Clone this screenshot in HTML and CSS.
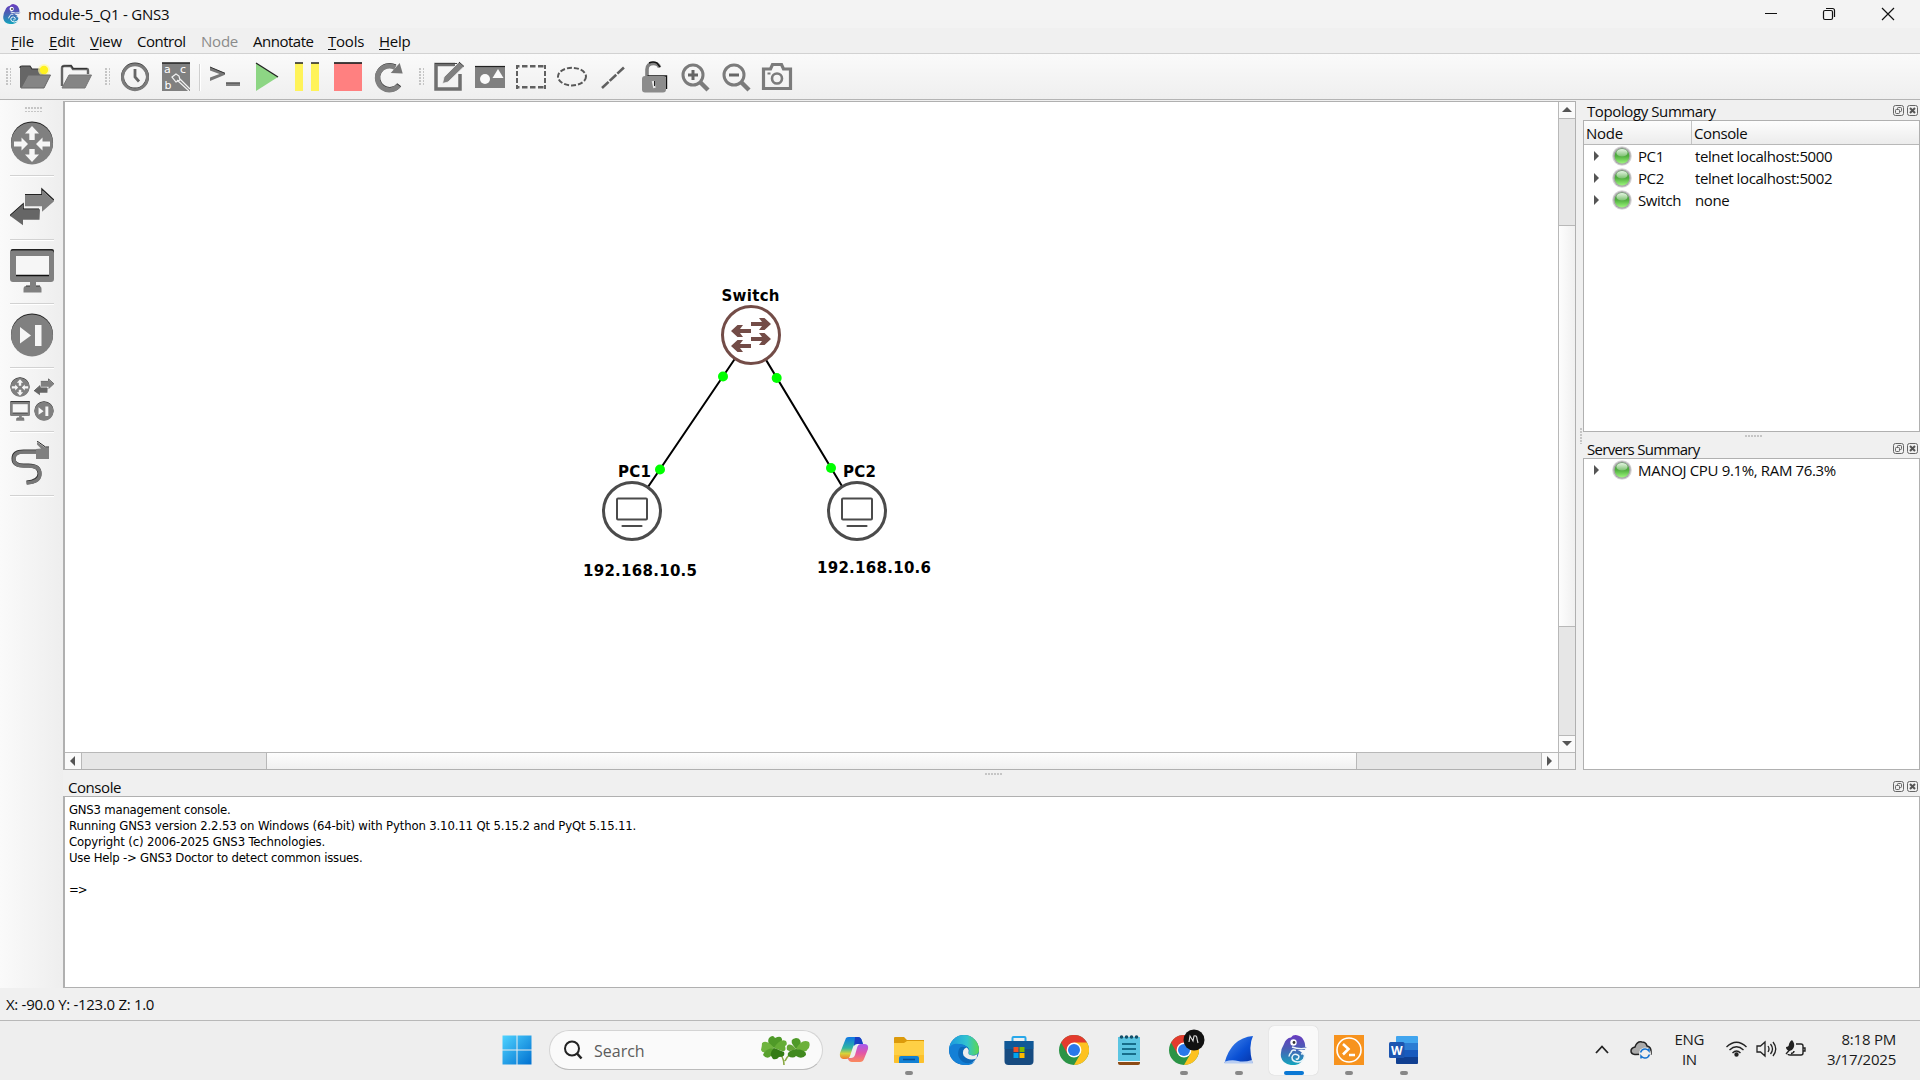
FILE: index.html
```html
<!DOCTYPE html>
<html lang="en">
<head>
<meta charset="utf-8">
<title>module-5_Q1 - GNS3</title>
<link rel="stylesheet" href="styles.css">
</head>
<body>
<svg class="defs" width="0" height="0">
  <defs>
    <linearGradient id="led" x1="0" y1="0" x2="0" y2="1"><stop offset="0" stop-color="#4f9a4c"/><stop offset=".5" stop-color="#4fae3d"/><stop offset="1" stop-color="#9cf57c"/></linearGradient>
    <linearGradient id="shine" x1="0" y1="0" x2="0" y2="1"><stop offset="0" stop-color="#e6f5e4"/><stop offset="1" stop-color="#7cc070"/></linearGradient>
    <linearGradient id="gns" gradientUnits="userSpaceOnUse" x1="0" y1="0" x2="0" y2="30"><stop offset="0" stop-color="#6a3bc0"/><stop offset=".45" stop-color="#4a5fb4"/><stop offset="1" stop-color="#14a5bd"/></linearGradient>
    <linearGradient id="win" x1="0" y1="0" x2="1" y2="1"><stop offset="0" stop-color="#4fd3ff"/><stop offset="1" stop-color="#0070d0"/></linearGradient>
    <symbol id="s-led" viewBox="0 0 20 20"><circle cx="10" cy="10" r="9.8" fill="#d6d6d6"/><circle cx="10" cy="10" r="8.7" fill="#a9a7aa"/><circle cx="10" cy="10" r="7.4" fill="url(#led)"/><ellipse cx="10" cy="6.7" rx="5.6" ry="3.8" fill="url(#shine)"/></symbol>
    <symbol id="s-float" viewBox="0 0 11 11"><rect x=".5" y=".5" width="10" height="10" rx="2" fill="none" stroke="#666"/><rect x="4.5" y="2.5" width="4" height="4" rx=".8" fill="none" stroke="#666"/><rect x="2.5" y="4.5" width="4" height="4" rx=".8" fill="#f0f0f0" stroke="#666"/></symbol>
    <symbol id="s-close" viewBox="0 0 11 11"><rect x=".5" y=".5" width="10" height="10" rx="2" fill="none" stroke="#666"/><path d="M3 3l5 5M8 3l-5 5" stroke="#555" stroke-width="2"/></symbol>
    <symbol id="s-router" viewBox="0 0 44 44"><circle cx="22" cy="21.4" r="21" fill="#222"/><circle cx="22" cy="22.4" r="21" fill="#808080"/><g fill="#f6f6f6"><path d="M22 5l7 7.5h-4.3V19h-5.4v-6.5H15z"/><path d="M22 41l7-7.500h-4.300V28h-5.400v5.500H15z"/><path d="M18 23l-6.500-6.500v4H4v5h7.500v4z"/><path d="M26 23l6.500-6.500v4H40v5h-7.500v4z"/></g></symbol>
    <symbol id="s-switch" viewBox="0 0 44 44"><g transform="translate(0 2.200)"><path d="M15 7.500h17V2l12 11" fill="none" stroke="#222" stroke-width="1.500"/><path d="M15 8h17V3l12 11-12 10.500V19H15z" fill="#808080"/><path d="M29 22H13v-5L0 28.500" fill="none" stroke="#111" stroke-width="1.500"/><path d="M30 22H13v-5L0 28.500 13 38v-5.500h16.500z" fill="#666"/></g></symbol>
    <symbol id="s-monitor" viewBox="0 0 44 44"><rect x=".5" y="0" width="43.500" height="30" rx="2" fill="#222"/><path d="M3 1.500h38q3 0 3 3V30q0 3-3 3H26v4h3q2.500 0 2.500 3v3.500h-18V40q0-3 2.500-3h4v-4H3q-3 0-3-3V4.500q0-3 3-3z" fill="#808080"/><path d="M6 7h33v19H6z" fill="#f6f6f6"/><path d="M6 26.500h33" stroke="#111" stroke-width="1.300"/><path d="M16 37h4M26 37h4" stroke="#333"/></symbol>
    <symbol id="s-end" viewBox="0 0 44 44"><circle cx="22" cy="21.400" r="21" fill="#222"/><circle cx="22" cy="22.400" r="21" fill="#808080"/><path d="M10 14v16.500l11-8zM25 12h6.500v21H25z" fill="#f6f6f6"/></symbol>
    <symbol id="s-chameleon" viewBox="0 0 30 30"><path d="M5 9Q7 3 12 2.500q2-3 6-2.300 5 .800 7 5.800 1.500 3 1 5.500l1.500 1-2 2.500-7 0q5 2 6.500 5.500-1 9-10.500 9.700Q4 30 2 22q-1-7 3-13z" fill="url(#gns)"/><path d="M13 12q7 2.500 14 1.200M17 15.500q-4-1.500-5 2-2 2-2 4M22 19q4-1 3.500 3-1.500 5-7 5-5.500-.500-5.500-4.500 1-4 4.500-3t2 3.500-2.500 .500" fill="none" stroke="#eaf4f8" stroke-width="1.500"/><circle cx="14.500" cy="7.500" r="3.200" fill="#fff"/><circle cx="15" cy="7.500" r="1.400" fill="#333"/></symbol>
    <symbol id="s-chrome" viewBox="0 0 30 30"><circle cx="15" cy="15" r="15" fill="#2b9446"/><path d="M15 15L2 7.500A15 15 0 0 1 28 7.500z" fill="#e33b2e"/><path d="M15 7.500h13A15 15 0 0 1 15 30l6.500-11.200z" fill="#fdc221"/><path d="M2 7.500l6.500 11.250L15 7.500z" fill="#e33b2e"/><circle cx="15" cy="15" r="7.400" fill="#fff"/><circle cx="15" cy="15" r="6" fill="#2a78ea"/></symbol>
  </defs>
</svg>

<header class="titlebar">
  <svg class="app-icon" viewBox="0 0 30 30"><use href="#s-chameleon"/></svg>
  <span class="app-title">module-5_Q1 - GNS3</span>
  <svg class="window-buttons" width="132" height="28" viewBox="0 0 132 28" fill="none" stroke="#111" stroke-width="1.200"><path d="M1 13.500h12M118 8l12 12M130 8l-12 12"/><rect x="59.500" y="10.500" width="9" height="9" rx="1.500"/><path d="M62 8.500h6.500q2 0 2 2V17"/></svg>
</header>

<nav class="menubar">
  <span><u>F</u>ile</span><span><u>E</u>dit</span><span><u>V</u>iew</span><span class="tight">Control</span><span class="disabled">Node</span><span class="tight">Annotate</span><span><u>T</u>ools</span><span><u>H</u>elp</span>
</nav>

<div class="toolbar">
  <i class="grip first"></i>
  <svg viewBox="0 0 30 30"><path d="M0 6q0-2 2-2h8l2 3h14v4L0 26z" fill="#666"/><path d="M0 6q0-2 2-2h8l2 3h9" fill="none" stroke="#333" stroke-width="1.200"/><circle cx="24" cy="8" r="6" fill="#fff9a0" opacity=".7"/><circle cx="24" cy="8" r="4.200" fill="#fff21f"/><path d="M8 13h22.500l-6.500 13H1z" fill="#858585" stroke="#666"/></svg>
  <svg viewBox="0 0 30 30"><path d="M1 24V6q0-2 2-2h7l2 3h14q1 0 1 2v3" fill="none" stroke="#666" stroke-width="2.400"/><path d="M1 5q1-1.500 9-1.500l2 3h14" fill="none" stroke="#333" stroke-width="1.200"/><path d="M8 13h22.500l-6.500 13H1z" fill="#858585" stroke="#777"/></svg>
  <i class="grip"></i>
  <svg viewBox="0 0 30 30"><circle cx="15" cy="14.600" r="12.500" fill="none" stroke="#333" stroke-width="3"/><circle cx="15" cy="15.200" r="12.500" fill="none" stroke="#7b7b7b" stroke-width="3"/><path d="M15 7v8l4 4.500" fill="none" stroke="#666" stroke-width="2.800"/></svg>
  <svg viewBox="0 0 30 30"><path d="M1 1h28v28H1z" fill="#808080"/><path d="M1 1h28" stroke="#222" stroke-width="1.500"/><g class="glyphs"><text x="3" y="10.500">a</text><text x="19" y="10.500">c</text><text x="3.500" y="26.500">b</text></g><path d="M11 15l4-3 3 2 1 4-4 2zM16 18l12 11M19 17l10 10" fill="none" stroke="#f2f2f2" stroke-width="1.200"/></svg>
  <i class="separator"></i>
  <svg viewBox="0 0 30 30"><path d="M0 5l15 6v1.800L0 19v-3.500l9.500-3.500L0 8.500z" fill="#777"/><path d="M0 5l15 6.300" stroke="#333"/><path d="M16 20.500h14v3.500H16z" fill="#808080"/><path d="M16 21h14" stroke="#444"/></svg>
  <svg viewBox="0 0 30 30"><path d="M5 1l22 14L5 29z" fill="#8dd684"/><path d="M5 1l22 14" stroke="#222" stroke-width="1.300"/></svg>
  <svg viewBox="0 0 30 30"><path d="M3 1h8v28H3zM19 1h8v28h-8z" fill="#fff359"/><path d="M3 1h8M19 1h8" stroke="#222" stroke-width="1.500"/></svg>
  <svg viewBox="0 0 30 30"><path d="M1 1h28v28H1z" fill="#ff8080"/><path d="M1 1h28" stroke="#222" stroke-width="1.700"/></svg>
  <svg viewBox="0 0 30 30"><g transform="translate(.7 0)"><path d="M24.500 23.500A12 12 0 1 1 20.500 5.500" fill="none" stroke="#333" stroke-width="5" transform="translate(0 -.7)"/><path d="M24 23.500A12 12 0 1 1 20.500 5.500" fill="none" stroke="#808080" stroke-width="5"/><path d="M25 1v0l3 10.500-12-.500z" fill="#777"/></g></svg>
  <i class="grip last"></i>
  <svg viewBox="0 0 30 30"><path d="M26 12v15H2V2.500h19" fill="none" stroke="#6f6f6f" stroke-width="3.500"/><path d="M1 1.500h24" stroke="#444"/><path d="M10 15L25 0l5 4.500L14 20l-5.500 1.500z" fill="#808080" stroke="#f3f3f3" stroke-width=".8"/><path d="M25 0l5 4.500" stroke="#333"/></svg>
  <svg viewBox="0 0 30 30"><path d="M0 4h30v22H0z" fill="#808080"/><path d="M0 4.500h30" stroke="#222" stroke-width="1.200"/><circle cx="10" cy="17" r="5" fill="#fafafa"/><path d="M23 7l5.500 9h-11z" fill="#fafafa"/></svg>
  <svg viewBox="0 0 30 30" fill="none" stroke="#606060"><path d="M0 4.300h30M0 25.200h30" stroke-width="2.600" stroke-dasharray="5.500 2.500" stroke-dashoffset="2"/><path d="M1 3v24M29 3v24" stroke-width="2" stroke-dasharray="5 2" stroke-dashoffset="1"/></svg>
  <svg viewBox="0 0 30 30"><ellipse cx="15" cy="14.600" rx="14" ry="8.800" fill="none" stroke="#585858" stroke-width="2" stroke-dasharray="5 2"/></svg>
  <svg viewBox="0 0 30 30"><path d="M4 26L27 4.500" stroke="#606060" stroke-width="2.600" stroke-dasharray="9 1.500"/></svg>
  <svg viewBox="0 0 30 30"><path d="M8 14V7.500q0-6 6.500-6 5 0 6 4" fill="none" stroke="#808080" stroke-width="3.600"/><path d="M10 1q4-2 8 0l3 4M8.500 14h19V27" fill="none" stroke="#111" stroke-width="1.400"/><rect x="3" y="14" width="24" height="16.500" rx="3" fill="#8c8c8c"/><path d="M14 19l1.500 7" stroke="#e8e8e8" stroke-width="2.500"/><path d="M15.500 19v5" stroke="#222"/></svg>
  <svg viewBox="0 0 30 30" fill="none" stroke="#7b7b7b"><circle cx="13" cy="13" r="10" stroke-width="3"/><path d="M20 20l8 8" stroke-width="4.500"/><path d="M8 13h10M13 8v10" stroke-width="3" stroke="#666"/></svg>
  <svg viewBox="0 0 30 30" fill="none" stroke="#7b7b7b"><circle cx="13" cy="13" r="10" stroke-width="3"/><path d="M20 20l8 8" stroke-width="4.500"/><path d="M8 13h10" stroke-width="3" stroke="#666"/></svg>
  <svg viewBox="0 0 30 30" fill="none" stroke="#7b7b7b"><path d="M1.500 7h7l2-4.500h9l2 4.500h7v19.500h-27z" stroke-width="3.200"/><circle cx="15" cy="16.500" r="5" stroke-width="2.600"/><path d="M5.500 11.500h3" stroke-width="2"/></svg>
</div>

<main class="workspace">
  <aside class="devices">
    <i class="hgrip"></i>
    <div><svg><use href="#s-router"/></svg></div>
    <div><svg><use href="#s-switch"/></svg></div>
    <div><svg><use href="#s-monitor"/></svg></div>
    <div><svg><use href="#s-end"/></svg></div>
    <div class="all"><svg><use href="#s-router"/></svg><svg><use href="#s-switch"/></svg><svg><use href="#s-monitor"/></svg><svg><use href="#s-end"/></svg></div>
    <div><svg viewBox="0 0 44 44"><path d="M27 11H14q-10 0-10 7t10 7h5q11 0 11 8t-13 9" fill="none" stroke="#333" stroke-width="4" transform="translate(-.5 -.6)"/><path d="M27 11H14q-10 0-10 7t10 7h5q11 0 11 8t-13 9" fill="none" stroke="#777" stroke-width="3.400"/><path d="M27 1l8 5.500h4V18H26V8l5-.500-4-4z" fill="#808080"/><path d="M27 0l8.500 6H39" fill="none" stroke="#222"/></svg></div>
  </aside>

  <div class="content">
    <div class="upper">
      <section class="canvas-view">
        <svg class="scene" width="1493" height="650" viewBox="65 102 1493 650">
          <path d="M631.700 511L751 335 857 511" fill="none" stroke="#000" stroke-width="2"/>
          <g fill="#0f0"><circle cx="723" cy="376.500" r="5"/><circle cx="660" cy="469.500" r="5"/><circle cx="776.700" cy="378" r="5"/><circle cx="831" cy="468" r="5"/></g>
          <g transform="translate(751 335)"><circle r="28.500" fill="#fff" stroke="#734c47" stroke-width="3"/><path id="arrow-r" d="M0-13h11l-3-4h5.500l6.500 6-6.500 6H8l3-4H0z" fill="#734c47"/><use href="#arrow-r" y="15"/><path id="arrow-l" d="M0-6h-11l3-4h-5.500l-6.500 6 6.500 6h5.500l-3-4H0z" fill="#734c47"/><use href="#arrow-l" y="15"/></g>
          <g id="pc" fill="none" stroke="#4b4b4b"><circle cx="632" cy="511" r="28.500" fill="#fff" stroke-width="3"/><rect x="617" y="498.500" width="30" height="21" rx="1" stroke-width="2"/><path d="M622.500 526h19" stroke-width="2.200" stroke-linecap="round"/></g>
          <use href="#pc" x="225"/>
          <g class="labels"><text x="721.500" y="300.500" textLength="58">Switch</text><text x="618" y="476.500" textLength="33">PC1</text><text x="843" y="476.500" textLength="33">PC2</text><text x="583" y="575.500" textLength="114">192.168.10.5</text><text x="817" y="572.500" textLength="114">192.168.10.6</text></g>
        </svg>
        <div class="vscroll"><i class="up"></i><b></b><i class="down"></i></div>
        <div class="hscroll"><i class="left"></i><b></b><i class="right"></i></div>
        <div class="corner"></div>
      </section>
      <div class="splitter"></div>
      <section class="docks">
        <div class="dock-title"><span>Topology Summary</span><svg><use href="#s-float"/></svg><svg><use href="#s-close"/></svg></div>
        <div class="box topology">
          <div class="tree-head"><span>Node</span><span>Console</span></div>
          <div class="row"><i></i><svg><use href="#s-led"/></svg><span class="name">PC1</span><span>telnet localhost:5000</span></div>
          <div class="row"><i></i><svg><use href="#s-led"/></svg><span class="name">PC2</span><span>telnet localhost:5002</span></div>
          <div class="row"><i></i><svg><use href="#s-led"/></svg><span class="name">Switch</span><span>none</span></div>
        </div>
        <div class="dock-split"><i class="hgrip"></i></div>
        <div class="dock-title servers"><span>Servers Summary</span><svg><use href="#s-float"/></svg><svg><use href="#s-close"/></svg></div>
        <div class="box servers-box">
          <div class="row"><i></i><svg><use href="#s-led"/></svg><span class="load">MANOJ CPU 9.1%, RAM 76.3%</span></div>
        </div>
      </section>
    </div>
    <div class="console-split"><i class="hgrip"></i></div>
    <div class="dock-title console-title"><span>Console</span><svg><use href="#s-float"/></svg><svg><use href="#s-close"/></svg></div>
    <div class="box console"><p>GNS3 management console.</p><p class="wide">Running GNS3 version 2.2.53 on Windows (64-bit) with Python 3.10.11 Qt 5.15.2 and PyQt 5.15.11.</p><p class="wide">Copyright (c) 2006-2025 GNS3 Technologies.</p><p>Use Help -&gt; GNS3 Doctor to detect common issues.</p><p>&nbsp;</p><p class="prompt">=&gt;</p></div>
  </div>
</main>

<div class="status"><span>X: -90.0 Y: -123.0 Z: 1.0</span></div>

<footer class="taskbar">
  <div class="apps">
    <div class="start"><svg width="30" height="30" viewBox="0 0 30 30" fill="url(#win)"><path d="M.5.500H29.500V29.500H.500z"/><path d="M15 0v30M0 15h30" stroke="#eee"/></svg></div>
    <div class="search">
      <svg width="20" height="20" viewBox="0 0 20 20" fill="none" stroke="#222" stroke-width="2"><circle cx="9" cy="8.500" r="7"/><path d="M14 13.500l4.500 5" stroke-width="2.600"/></svg>
      <span>Search</span>
      <svg class="clover" width="50" height="32" viewBox="0 0 50 32"><path d="M24 30q0-9-8-16M25 26q3-7 11-10" fill="none" stroke="#8aa944" stroke-width="1.600"/><g fill="#4f9a28"><path d="M14 13Q6 9 9 3q4-4 6 0 6-3 7 1 1 4-8 9z"/><path d="M14 13Q20 3 26 6q2 4-1 5 2 6-3 5z" fill="#65ad36"/><path d="M14 13Q7 4 2 8q0 3-1 7 2 4 5 1z" fill="#6fb43e"/><path d="M14 13Q4 14 3 20q4 5 8 1z" fill="#58a12d"/><path d="M14 13Q8 19 13 24q4 1 6-2 7 0 5-5z" fill="#347b16"/><path d="M36 14Q29 6 33 4l3-1q3 0 4 2 3 5-4 9z"/><path d="M36 14Q42 3 49 7q2 5-2 8 0 3-11-1z" fill="#6cb13a"/><path d="M36 14Q30 7 27 11q-2 8 9 3z" fill="#65a536"/><path d="M36 14Q26 16 28 21q5 3 8 0 6 4 10-1 1-5-10-6z" fill="#40891e"/></g></svg>
    </div>
    <div class="app"><svg viewBox="0 0 30 30"><defs><linearGradient id="ca" x1="0" y1="0" x2="0" y2="1"><stop offset="0" stop-color="#0f77e6"/><stop offset=".5" stop-color="#2fb6a0"/><stop offset=".75" stop-color="#d6d33a"/><stop offset="1" stop-color="#f07a30"/></linearGradient><linearGradient id="cb" x1="0" y1="0" x2="0" y2="1"><stop offset="0" stop-color="#a45bf0"/><stop offset=".5" stop-color="#e255a8"/><stop offset="1" stop-color="#fb8a5c"/></linearGradient></defs><path d="M7 3q1-1 3-1h9q3 0 4 4l1 3h-6q-3 0-4 3l-3 9q-1 3-4 3H4q-4-1-3-6z" fill="url(#ca)"/><path d="M16 2h3q3 0 4 4l1 3h-6q-2 0-3 2z" fill="#1a3fc4"/><path d="M24 9h1q5 0 4 5l-4 10q-1 3-4 3h-8q-3 0-4-3l-1-1h4q3 0 4-3l2-7q1-4 4-4z" fill="url(#cb)"/></svg></div>
    <div class="app run"><svg viewBox="0 0 30 30"><path d="M0 3q0-1 1-1h9l3 3h17v6H0z" fill="#dc9a0b"/><path d="M0 8h10l3-2h16q1 0 1 1v20q0 1-1 1H1q-1 0-1-1z" fill="#ffd045"/><path d="M0 20h30v7q0 1-1 1H1q-1 0-1-1z" fill="#fbbb22" opacity=".7"/><path d="M5 28v-5q0-2 2-2h16q2 0 2 2v5z" fill="#1281d4"/><path d="M9 24.500h12" stroke="#0b4f93" stroke-width="1.500"/></svg></div>
    <div class="app"><svg viewBox="0 0 30 30"><defs><linearGradient id="ed" x1="0" y1="0" x2="1" y2="0"><stop offset="0" stop-color="#1b98e0"/><stop offset=".6" stop-color="#32c4cf"/><stop offset="1" stop-color="#5bd84f"/></linearGradient></defs><circle cx="15" cy="15" r="15" fill="#0c68b8"/><path d="M0 15A15 15 0 0 1 30 15q0 5-6 5-5 0-4.500-2 2-3-1-6Q14 8 6 10q-5 2-6 6z" fill="url(#ed)"/><path d="M10 14q-3 8 4 13 6 3 12-1Q22 32 12 29.500 0 26 0 14q2-6 10-5 6 0 8 4-6-3-8 1z" fill="#1480d6"/><path d="M19.500 17q-1 3 4 3.500 4 0 5-2l-1 5q-8 3-13-3-2-6 3-8 3 2 2 4.500z" fill="#eee"/></svg></div>
    <div class="app"><svg viewBox="0 0 30 30"><path d="M8.500 7V3q0-1 1-1h11q1 0 1 1v4" fill="none" stroke="#28a8ea" stroke-width="2"/><path d="M.5 6h29v20q0 4-4 4h-21q-4 0-4-4z" fill="#174b80"/><path d="M.500 6h29v8H.500z" fill="#0a66ad" opacity=".5"/><path d="M9.500 12h5v5h-5z" fill="#f25022"/><path d="M15.500 12h5v5h-5z" fill="#7fba00"/><path d="M9.500 18h5v5h-5z" fill="#00a4ef"/><path d="M15.500 18h5v5h-5z" fill="#ffb900"/></svg></div>
    <div class="app"><svg><use href="#s-chrome"/></svg></div>
    <div class="app"><svg viewBox="0 0 30 30"><path d="M4 26h22v2q0 2-2 2H6q-2 0-2-2z" fill="#8c4a14"/><path d="M4 24h22v3H4z" fill="#f5f5f5"/><path d="M4 2h22v24H4z" fill="#5cc5e2"/><path d="M8 9h14M8 14h14M8 19h14" stroke="#176d8a" stroke-width="2"/><g fill="#14506a"><circle cx="7.500" cy="2" r="1.800"/><circle cx="12.500" cy="2" r="1.800"/><circle cx="17.500" cy="2" r="1.800"/><circle cx="22.500" cy="2" r="1.800"/></g></svg></div>
    <div class="app run"><svg><use href="#s-chrome"/></svg><svg class="badge" viewBox="0 0 22 22"><circle cx="11" cy="11" r="10.500" fill="#111"/><path d="M6 13l1-6 3 5 1-5q3-1 3 3l1 4" fill="none" stroke="#ddd" stroke-width="1.100"/></svg></div>
    <div class="app run"><svg viewBox="0 0 30 30"><defs><linearGradient id="fin" x1="0" y1="0" x2="1" y2="1"><stop offset="0" stop-color="#4e8ff0"/><stop offset=".6" stop-color="#0a50d4"/><stop offset="1" stop-color="#0634a8"/></linearGradient></defs><path d="M.500 28Q7 3 29 1q-5 10-.500 27z" fill="url(#fin)"/><path d="M1 26.500q7-2 13-.500t14-1l1 3.500H.500z" fill="#b8cdf2"/></svg></div>
    <div class="app run active"><svg><use href="#s-chameleon"/></svg></div>
    <div class="app run"><svg viewBox="0 0 30 30"><path d="M0 0h30v30H0z" fill="#f7931e"/><circle cx="15" cy="15" r="12" fill="none" stroke="#fff" stroke-width="1.600"/><path d="M9 9l5.500 5L9 19.500M15 20h6" fill="none" stroke="#fff" stroke-width="2.600"/></svg></div>
    <div class="app run"><svg viewBox="0 0 30 30"><path d="M7 2q0-1 1-1h20q1 0 1 1v6H7z" fill="#41a5ee"/><path d="M7 8h22v7H7z" fill="#2b7cd3"/><path d="M7 15h22v7H7z" fill="#185abd"/><path d="M7 22h22v6q0 1-1 1H8q-1 0-1-1z" fill="#103f91"/><rect x="0" y="7" width="15.500" height="16" rx="1.500" fill="#1c55b0"/><text x="7.700" y="19.500" class="w">W</text></svg></div>
  </div>
  <div class="tray">
    <svg class="chev" width="14" height="9" viewBox="0 0 14 9"><path d="M1 8l6-6.500L13 8" fill="none" stroke="#222" stroke-width="1.800"/></svg>
    <svg class="cloud" width="22" height="20" viewBox="0 0 22 20"><path d="M5 14.500Q1 14 1 11t4-4q2-6 7-5 4 0 5 4 4 1 4 5v3z" fill="#aaa" stroke="#222" stroke-width="1.500"/><circle cx="15" cy="13.500" r="6" fill="#eee"/><path d="M10.500 12.500q1.500-4 5-3.500 2 .300 3.500 2V8.500M19.500 14.500q-1.500 4-5 3.500-2-.300-3.500-2v2.500" fill="none" stroke="#1673d0" stroke-width="1.500"/></svg>
    <div class="lang"><span>ENG</span><span>IN</span></div>
    <svg class="wifi" width="21" height="16" viewBox="0 0 21 16" fill="none" stroke="#222" stroke-width="1.400"><path d="M.500 6q10-9.500 20 0M3.500 9q7-6.500 14 0M6.500 12q4-4 8 0"/><circle cx="10.500" cy="13.500" r="1.500" fill="#222"/></svg>
    <svg class="vol" width="21" height="18" viewBox="0 0 21 18" fill="none" stroke="#222" stroke-width="1.300"><path d="M1 6h3.500L9 2v14l-4.500-4H1zM12 6q2 3 0 6M14.500 4q4 5 0 10M17 2q5.500 7 0 14"/></svg>
    <svg class="bat" width="21" height="18" viewBox="0 0 21 18" fill="none" stroke="#222" stroke-width="1.400"><path d="M11 4h5q2 0 2 2v7q0 2-2 2H5q-2 0-2-1M18.500 8h1.500v3h-1.500M9 11q0 2-3 2.500"/><path d="M7 0q3.500 4 1.500 8-1.500 3-4 3-3.500-1-3.500-4 3 0 3-3 1-3 3-4z" fill="#222" stroke="none"/><path d="M1 14l3.500-4"/></svg>
    <div class="clock"><span>8:18 PM</span><span>3/17/2025</span></div>
  </div>
</footer>
</body>
</html>
```
FILE: styles.css
```css
* { box-sizing: border-box; }
body { margin: 0; width: 1920px; height: 1080px; overflow: hidden; display: flex; flex-direction: column; background: #f0f0f0; color: #0b0b0b; font: 15px/20px "Open Sans", "Noto Sans", sans-serif; letter-spacing: -.22px; }
svg { display: block; flex: none; }
.defs { position: absolute; }
span { white-space: pre; }

.titlebar { height: 28px; flex: none; display: flex; align-items: center; background: #f3f3f3; padding-left: 2px; }
.app-icon { width: 20px; height: 20px; margin-right: 6px; }
.window-buttons { margin-left: auto; margin-right: 24px; }

.menubar { height: 26px; flex: none; display: grid; grid-template-columns: 38px 41px 47px 64px 52px 75px 51px 60px; justify-items: start; align-items: center; padding-left: 11px; border-bottom: 1px solid #d2d2d2; }
.menubar u { text-underline-offset: 2px; text-decoration-thickness: 1px; }
.menubar .tight { letter-spacing: -.48px; }
.disabled { color: #8b8b8b; }

.toolbar { height: 46px; flex: none; display: flex; align-items: flex-start; padding: 8px 0 0 6px; border-bottom: 1px solid #b4b4b4; background: linear-gradient(#fafafa, #efefef); }
.toolbar svg { width: 30px; height: 30px; margin: 0 5.5px; overflow: visible; }
.glyphs { font: 11px "DejaVu Sans", sans-serif; letter-spacing: 0; fill: #fff; }
.grip { width: 5px; height: 18px; margin: 6px 4px 0 9px; background: radial-gradient(circle at 1px 1px, #c4c4c4 .7px, transparent 1px) 0 0 / 4px 3px; }
.grip.first { margin: 6px 3px 0 0; }
.grip.last { margin-left: 10px; margin-right: 4px; }
.separator { width: 2px; height: 27px; margin: 2px 3px 0; border-left: 1px solid #cfcfcf; border-right: 1px solid #fff; }
.hgrip { display: block; width: 17px; height: 2px; background: radial-gradient(circle at 1px 1px, #c4c4c4 .7px, transparent 1px) 0 0 / 3px 4px; }

.workspace { height: 888px; flex: none; display: flex; }
.devices { width: 63px; flex: none; background: linear-gradient(90deg, #fafafa, #eeeeee); padding: 7px 8px 0 10px; }
.devices .hgrip { height: 5px; margin: 0 0 0 15px; }
.devices div { height: 64px; width: 44px; padding-top: 9px; border-bottom: 1px solid #d2d2d2; box-shadow: 0 1px #fff; }
.devices svg { width: 44px; height: 44px; }
.devices .all { display: grid; grid-template-columns: 19px 20px; gap: 4px 5px; padding-bottom: 11px; }
.devices .all svg { width: 20px; height: 20px; }

.content { flex: 1; display: flex; flex-direction: column; padding-top: 1px; }
.upper { display: flex; height: 669px; flex: none; }
.canvas-view { width: 1513px; height: 669px; border: 1px solid #b0b0b0; border-left-width: 2px; display: grid; grid-template: 650px 17px / 1493px 17px; background: #fff; }
.scene { display: block; }
.labels { font: bold 15px "DejaVu Sans", sans-serif; letter-spacing: 0; fill: #000; }
.vscroll { border-left: 1px solid #b8b8b8; background: #e6e6e6; display: flex; flex-direction: column; }
.vscroll i, .hscroll i { display: flex; align-items: center; justify-content: center; background: #fafafa; flex: none; }
.vscroll i { height: 17px; }
.vscroll .up { border-bottom: 1px solid #b8b8b8; margin-bottom: 106px; }
.vscroll .down { border-top: 1px solid #b8b8b8; margin-top: auto; }
.vscroll b { height: 402px; background: linear-gradient(90deg, #fdfdfd, #f0f0f0); border: solid #b8b8b8; border-width: 1px 0; }
.hscroll { border-top: 1px solid #b8b8b8; background: #e6e6e6; display: flex; }
.hscroll i { width: 17px; padding-right: 2px; }
.hscroll .left { border-right: 1px solid #b8b8b8; margin-right: 184px; }
.hscroll .right { border-left: 1px solid #b8b8b8; margin-left: auto; }
.hscroll b { width: 1091px; background: linear-gradient(#fdfdfd, #f0f0f0); border: solid #b8b8b8; border-width: 0 1px; }
.corner { background: #f0f0f0; border: solid #b8b8b8; border-width: 1px 0 0 1px; }
.vscroll i::before, .hscroll i::before { content: ""; border: 5px solid transparent; }
.vscroll .up::before { border-top: 0; border-bottom-color: #555; margin-bottom: 2px; }
.vscroll .down::before { border-bottom: 0; border-top-color: #555; margin-bottom: 2px; }
.hscroll .left::before { border-left: 0; border-right-color: #555; }
.hscroll .right::before { border-right: 0; border-left-color: #555; }

.splitter { width: 7px; flex: none; background: radial-gradient(circle at 1px 1px, #c4c4c4 .7px, transparent 1px) 4px 0 / 4px 3px repeat-y content-box; padding: 327px 0 326px; }
.docks { width: 337px; letter-spacing: -.4px; }
.box { background: #fff; border: 1px solid #b0b0b0; }
.dock-title { height: 19px; display: flex; align-items: center; gap: 3px; padding: 0 2px 0 4px; }
.dock-title span { margin-right: auto; }
.dock-title svg { width: 11px; height: 11px; margin-top: -1px; }
.topology { height: 312px; }
.tree-head { height: 24px; display: flex; align-items: center; border-bottom: 1px solid #b8b8b8; background: linear-gradient(90deg, transparent 107px, #c4c4c4 107px 108px, transparent 108px), linear-gradient(#fdfdfd, #ececec); padding-left: 2px; }
.tree-head span:first-child { flex: 0 0 36px; margin-right: 71px; letter-spacing: -.23px; }
.row { height: 22px; display: flex; align-items: center; padding-left: 10px; }
.row i { border: 5px solid transparent; border-left-color: #555; border-right: 0; margin-right: 13px; }
.row svg { width: 20px; height: 20px; margin-right: 6px; }
.row .name { width: 57px; }
.row .load { letter-spacing: -.35px; }
.dock-split { height: 7px; padding: 3px 0 0 162px; }
.dock-title.servers { height: 19px; letter-spacing: -.7px; }
.servers-box { height: 312px; }
.console-split { height: 8px; padding: 3px 0 0 922px; }
.console-title { height: 18px; padding-left: 5px; letter-spacing: -.44px; }
.console { height: 192px; padding: 5px 4px; border-left-width: 2px; font: 13px/16px "DejaVu Sans Condensed", "Noto Sans", sans-serif; letter-spacing: -.22px; color: #000; }
.console p { margin: 0; }
.console .wide { letter-spacing: -.155px; }
.console .prompt { letter-spacing: -1px; }

.status { height: 32px; flex: none; padding: 6px 0 0 6px; letter-spacing: -.3px; }

.taskbar { height: 60px; flex: none; display: flex; background: #eee; border-top: 1px solid #b8b8b8; color: #1b1b1b; }
.apps { display: flex; align-items: center; margin-left: 502px; padding-bottom: 1px; }
.start { width: 47px; }
.search { width: 274px; height: 40px; border: 1px solid #d4d4d4; border-bottom-color: #bbb; border-radius: 20px; background: #fafafa; display: flex; align-items: center; padding-left: 13px; color: #5c5c5c; font-size: 16px; letter-spacing: 0; margin-right: 3px; }
.search span { margin-left: 11px; padding-top: 1px; }
.clover { margin-left: auto; margin-right: 12px; margin-top: 2px; }
.app { width: 49px; height: 49px; margin: 0 3px; position: relative; display: flex; align-items: center; justify-content: center; border-radius: 5px; }
.app svg { width: 30px; height: 30px; }
.run::after { content: ""; position: absolute; bottom: 0; width: 8px; height: 4px; border-radius: 2px; background: #888; }
.active { background: #f9f9f9; box-shadow: 0 0 1px #bbb; }
.active::after { width: 20px; background: #0b78d4; }
.app .badge { position: absolute; left: 24px; top: 3px; width: 22px; height: 22px; }
.w { font: bold 12px "Open Sans", sans-serif; letter-spacing: 0; fill: #fff; text-anchor: middle; }
.tray { margin-left: auto; display: flex; align-items: center; padding: 0 24px 3px 0; }
.cloud { margin: 2px 23px 0 21px; }
.lang { text-align: center; letter-spacing: -.4px; }
.lang span, .clock span { display: block; }
.wifi { margin: 0 9px 0 22px; }
.vol { margin-right: 8px; }
.bat { margin-right: 21px; }
.clock { display: flex; flex-direction: column; align-items: flex-end; }
```
